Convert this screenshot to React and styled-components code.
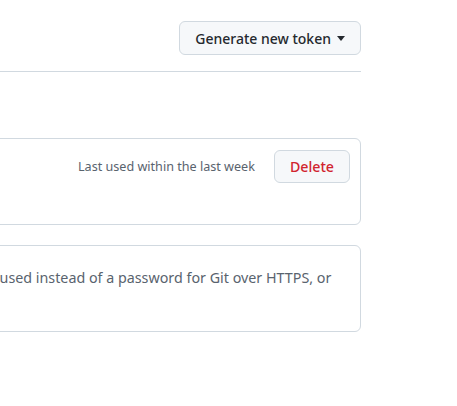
import React from "react";
import styled, { createGlobalStyle } from "styled-components";

const GlobalStyle = createGlobalStyle`
  body {
    margin: 0;
    background: #ffffff;
    font-family: "Noto Sans", "Liberation Sans", sans-serif;
    color: #1f2328;
  }
`;

const Viewport = styled.div`
  width: 457px;
  height: 406px;
  overflow: hidden;
`;

const Main = styled.div`
  width: 1000px;
  margin-left: -639px;
`;

const Header = styled.div`
  display: flex;
  align-items: center;
  justify-content: space-between;
  padding: 21px 0 16px;
  border-bottom: 1px solid #d1d9e0;
`;

const Title = styled.h2`
  margin: 0;
  font-size: 24px;
  font-weight: 400;
`;

const Button = styled.button`
  display: inline-flex;
  align-items: center;
  gap: 6px;
  height: ${(p) => p.$h || 34}px;
  padding: 0 15px;
  background: #f6f8fa;
  border: 1px solid #d1d9e0;
  border-radius: 6px;
  font-family: inherit;
  font-size: ${(p) => p.$fs || 14.2}px;
  font-weight: 500;
  color: ${(p) => (p.$danger ? "#d1242f" : "#25292e")};
  cursor: pointer;
`;

const Caret = styled.span`
  width: 0;
  height: 0;
  border-left: 4px solid transparent;
  border-right: 4px solid transparent;
  border-top: 5px solid #25292e;
`;

const Intro = styled.p`
  margin: 0;
  height: 66px;
  display: flex;
  align-items: center;
  font-size: 14px;
  color: #59636e;
`;

const Card = styled.div`
  border: 1px solid #d1d9e0;
  border-radius: 6px;
  margin-bottom: 20px;
`;

const TokenRow = styled.div`
  display: flex;
  justify-content: space-between;
  align-items: flex-start;
  padding: 11px 10px 11px 16px;
  height: 63px;
`;

const TokenInfo = styled.div`
  font-size: 14px;
`;

const TokenName = styled.a`
  color: #0969da;
  font-weight: 600;
`;

const Actions = styled.div`
  display: flex;
  align-items: center;
  gap: 19px;
`;

const LastUsed = styled.span`
  font-size: 12.6px;
  color: #59636e;
`;

const Note = styled.p`
  margin: 0;
  padding: 21px 16px 22px 47px;
  font-size: 14.3px;
  line-height: 21px;
  color: #59636e;
  white-space: nowrap;
`;

export default function App() {
  return (
    <>
      <GlobalStyle />
      <Viewport>
        <Main>
          <Header>
            <Title>Personal access tokens (classic)</Title>
            <Button $fs={14}>
              Generate new token <Caret />
            </Button>
          </Header>
          <Intro>Tokens you have generated that can be used to access the GitHub API.</Intro>
          <Card>
            <TokenRow>
              <TokenInfo>
                <TokenName>deploy-token</TokenName>
              </TokenInfo>
              <Actions>
                <LastUsed>Last used within the last week</LastUsed>
                <Button $danger $h={33}>Delete</Button>
              </Actions>
            </TokenRow>
          </Card>
          <Card>
            <Note>
              Personal access tokens (classic) function like ordinary OAuth access tokens. They can be used instead of a password for Git over HTTPS, or
              <br />
              be used to authenticate to the API.
            </Note>
          </Card>
        </Main>
      </Viewport>
    </>
  );
}
